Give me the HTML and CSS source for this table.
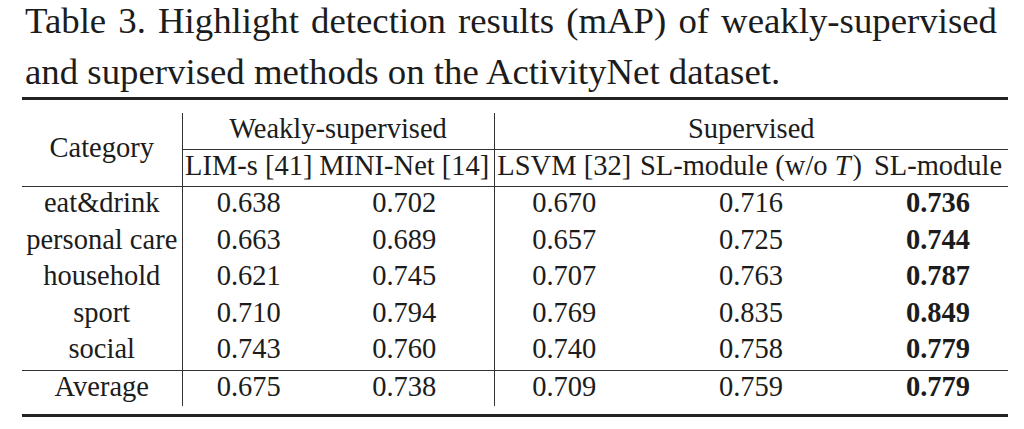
FILE: index.html
```html
<!DOCTYPE html>
<html lang="en">
<head>
<meta charset="utf-8">
<title>Table 3</title>
<link rel="stylesheet" href="styles.css">
</head>
<body>
<div class="caption">
  <div class="cap-line cap-first">Table 3. Highlight detection results (mAP) of weakly-supervised</div>
  <div class="cap-line">and supervised methods on the ActivityNet dataset.</div>
</div>
<div class="tbl-wrap">
  <div class="rule-thick rule-top"></div>
  <table class="results">
    <colgroup>
      <col class="c-cat">
      <col class="c-lim">
      <col class="c-mini">
      <col class="c-lsvm">
      <col class="c-slwo">
      <col class="c-sl">
    </colgroup>
    <thead>
      <tr class="hrow">
        <th rowspan="2" class="cat vline">Category</th>
        <th colspan="2" class="group vline">Weakly-supervised</th>
        <th colspan="3" class="group">Supervised</th>
      </tr>
      <tr class="hrow hrow2">
        <th>LIM-s [41]</th>
        <th class="vline">MINI-Net [14]</th>
        <th>LSVM [32]</th>
        <th>SL-module (w/o <i>T</i>)</th>
        <th>SL-module</th>
      </tr>
    </thead>
    <tbody>
      <tr class="drow">
        <td class="vline">eat&amp;drink</td><td>0.638</td><td class="vline">0.702</td><td>0.670</td><td>0.716</td><td class="best">0.736</td>
      </tr>
      <tr class="drow">
        <td class="vline">personal care</td><td>0.663</td><td class="vline">0.689</td><td>0.657</td><td>0.725</td><td class="best">0.744</td>
      </tr>
      <tr class="drow">
        <td class="vline">household</td><td>0.621</td><td class="vline">0.745</td><td>0.707</td><td>0.763</td><td class="best">0.787</td>
      </tr>
      <tr class="drow">
        <td class="vline">sport</td><td>0.710</td><td class="vline">0.794</td><td>0.769</td><td>0.835</td><td class="best">0.849</td>
      </tr>
      <tr class="drow">
        <td class="vline">social</td><td>0.743</td><td class="vline">0.760</td><td>0.740</td><td>0.758</td><td class="best">0.779</td>
      </tr>
      <tr class="drow avg">
        <td class="vline">Average</td><td>0.675</td><td class="vline">0.738</td><td>0.709</td><td>0.759</td><td class="best">0.779</td>
      </tr>
    </tbody>
  </table>
  <div class="rule-thick rule-bottom"></div>
</div>
</body>
</html>
```

FILE: styles.css
```css
html, body {
  margin: 0;
  padding: 0;
  background: #ffffff;
}

body {
  font-family: "Liberation Serif", "Times New Roman", serif;
  color: #1c1c1c;
  overflow: hidden;
}

.caption {
  margin: -5px 0 0 25px;
  width: 972px;
  font-size: 36.8px;
  line-height: 51px;
}

.cap-line {
  white-space: nowrap;
}

.cap-first {
  white-space: normal;
  text-align: justify;
  text-align-last: justify;
}

.tbl-wrap {
  margin-left: 22px;
  width: 986px;
}

.rule-thick {
  height: 3px;
  background: #222222;
}

.rule-top {
  margin-top: 0;
  margin-bottom: 13px;
}

.rule-bottom {
  margin-top: 8px;
}

.results {
  width: 986px;
  table-layout: fixed;
  border-collapse: collapse;
  font-size: 28.5px;
}

.c-cat { width: 160px; }
.c-lim { width: 133px; }
.c-mini { width: 179px; }
.c-lsvm { width: 140px; }
.c-slwo { width: 234px; }
.c-sl { width: 140px; }

.results th,
.results td {
  padding: 0 0 4px 0;
  text-align: center;
  white-space: nowrap;
  font-weight: normal;
  line-height: 32px;
}

.results .vline {
  border-right: 1px solid #333333;
}

.results th.group {
  border-bottom: 1px solid #333333;
}

.hrow2 th,
.results th.cat {
  border-bottom: 1px solid #333333;
}

.results th.cat {
  vertical-align: middle;
  padding-bottom: 4px;
}

.results .drow td {
  line-height: 32.5px;
}

.results .avg td {
  border-top: 1px solid #333333;
  line-height: 31px;
}

.results td.best {
  font-weight: bold;
}

.results th i {
  font-style: italic;
  padding-right: 2px;
}
```
